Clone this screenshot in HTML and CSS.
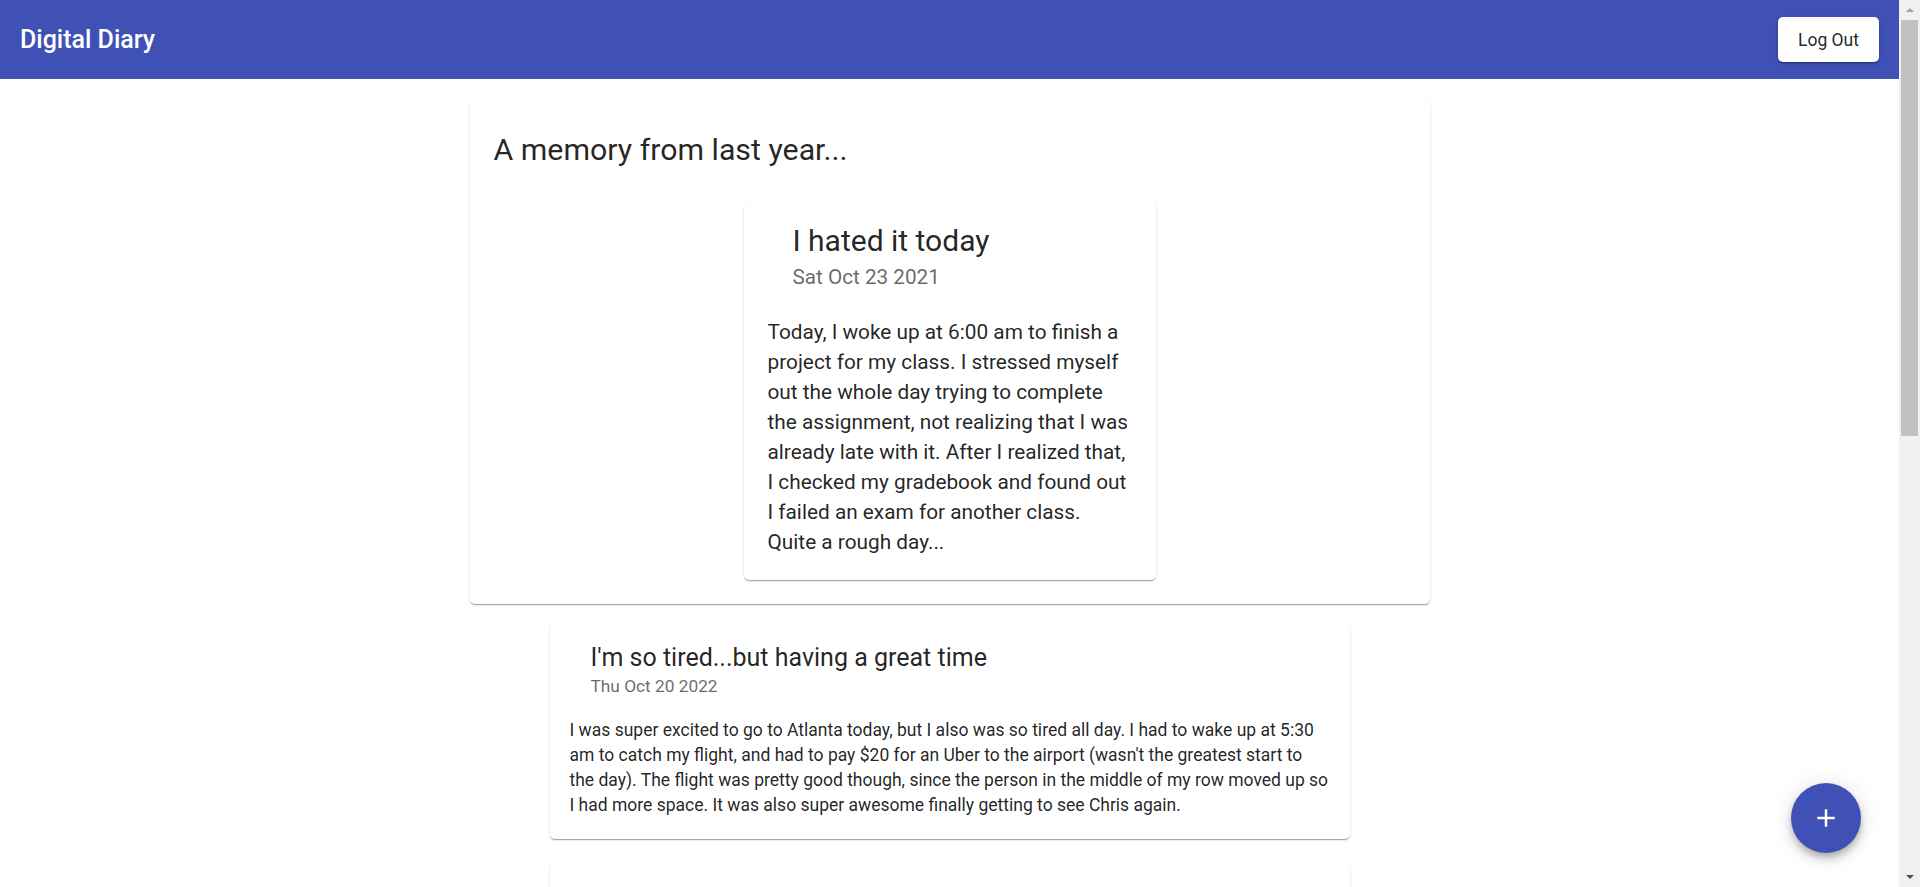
FILE: index.html
```html
<!DOCTYPE html>
<html lang="en">
<head>
<meta charset="utf-8">
<title>Digital Diary</title>
<link rel="stylesheet" href="styles.css">
</head>
<body>
<header class="appbar">
  <h1 class="brand">Digital Diary</h1>
  <button class="logout" type="button">Log Out</button>
</header>

<main class="content">
  <section class="memory">
    <h2 class="memory-heading">A memory from last year...</h2>
    <article class="memory-card">
      <div class="memory-card-head">
        <h3 class="memory-card-title">I hated it today</h3>
        <p class="memory-card-date">Sat Oct 23 2021</p>
      </div>
      <p class="memory-card-body">Today, I woke up at 6:00 am to finish a project for my class. I stressed myself out the whole day trying to complete the assignment, not realizing that I was already late with it. After I realized that, I checked my gradebook and found out I failed an exam for another class. Quite a rough day...</p>
    </article>
  </section>

  <div class="entries">
    <article class="entry">
      <div class="entry-head">
        <h3 class="entry-title">I'm so tired...but having a great time</h3>
        <p class="entry-date">Thu Oct 20 2022</p>
      </div>
      <p class="entry-body">I was super excited to go to Atlanta today, but I also was so tired all day. I had to wake up at 5:30 am to catch my flight, and had to pay $20 for an Uber to the airport (wasn't the greatest start to the day). The flight was pretty good though, since the person in the middle of my row moved up so I had more space. It was also super awesome finally getting to see Chris again.</p>
    </article>

    <article class="entry">
      <div class="entry-head">
        <h3 class="entry-title">Back to the daily grind</h3>
        <p class="entry-date">Mon Oct 17 2022</p>
      </div>
      <p class="entry-body">Classes started up again after the long weekend. I spent most of the afternoon in the library catching up on readings and then went to the gym with some friends. Dinner was leftover pasta, which honestly was better the second time around. Trying to get to bed early tonight.</p>
    </article>

    <article class="entry">
      <div class="entry-head">
        <h3 class="entry-title">A quiet Sunday</h3>
        <p class="entry-date">Sun Oct 16 2022</p>
      </div>
      <p class="entry-body">Slept in for the first time in weeks. Made pancakes, cleaned my room, and finally called my parents. In the evening I went on a long walk around the lake and watched the sunset. Nothing special happened, but it was exactly the kind of day I needed.</p>
    </article>

    <article class="entry">
      <div class="entry-head">
        <h3 class="entry-title">Midterm week</h3>
        <p class="entry-date">Wed Oct 12 2022</p>
      </div>
      <p class="entry-body">Two exams down, one more to go. The chemistry exam went better than expected, but I am not so sure about statistics. Celebrated with a late night pizza run before starting to study for the last one.</p>
    </article>
  </div>
</main>

<button class="fab" type="button" aria-label="add">
  <svg class="fab-icon" viewBox="0 0 24 24" width="30" height="30" aria-hidden="true"><path d="M19 13h-6v6h-2v-6H5v-2h6V5h2v6h6v2z" fill="#ffffff"/></svg>
</button>

<div class="scrollbar" aria-hidden="true">
  <div class="scroll-btn"><span class="arrow arrow-up"></span></div>
  <div class="scroll-thumb"></div>
  <div class="scroll-track"></div>
  <div class="scroll-btn"><span class="arrow arrow-down"></span></div>
</div>
</body>
</html>
```

FILE: styles.css
```css
html, body {
  margin: 0;
  padding: 0;
}

body {
  margin-right: 21px;
  font-family: Roboto, "Liberation Sans", Arial, sans-serif;
  color: rgba(0, 0, 0, 0.87);
  background: #ffffff;
}

/* Scrollbar as drawn in the reference */
.scrollbar {
  position: fixed;
  top: 0;
  right: 0;
  width: 21px;
  height: 100vh;
  background: #f1f1f1;
  display: flex;
  flex-direction: column;
  z-index: 20;
}

.scroll-btn {
  height: 20px;
  display: flex;
  align-items: center;
  justify-content: center;
}

.scroll-thumb {
  height: 416px;
  margin: 0 2px;
  background: #c1c1c1;
}

.scroll-track {
  flex: 1;
}

.arrow {
  width: 0;
  height: 0;
  border-left: 4.5px solid transparent;
  border-right: 4.5px solid transparent;
}

.arrow-up {
  border-bottom: 4.5px solid #a3a3a3;
}

.arrow-down {
  border-top: 4.5px solid #505050;
}

/* App bar */
.appbar {
  height: 79px;
  box-sizing: border-box;
  background: #3f51b5;
  display: flex;
  align-items: center;
  justify-content: space-between;
  padding: 0 20px;
}

.brand {
  margin: 0;
  font-size: 25px;
  font-weight: 500;
  line-height: 1.6;
  color: #ffffff;
}

.logout {
  height: 45px;
  padding: 0 20px;
  border: 0;
  border-radius: 5px;
  background: #ffffff;
  color: rgba(0, 0, 0, 0.87);
  font-family: Roboto, "Liberation Sans", Arial, sans-serif;
  font-size: 17.5px;
  font-weight: 400;
  box-shadow: 0 3px 1px -2px rgba(0,0,0,0.2), 0 2px 2px 0 rgba(0,0,0,0.14), 0 1px 5px 0 rgba(0,0,0,0.12);
  cursor: pointer;
}

/* Content */
.content {
  display: flex;
  flex-direction: column;
  align-items: center;
  padding: 21px 0 60px;
}

.memory {
  width: 960px;
  box-sizing: border-box;
  padding: 30px 24px 24px;
  border-radius: 5px;
  background: #ffffff;
  box-shadow: 0 2px 1px -1px rgba(0,0,0,0.2), 0 1px 1px 0 rgba(0,0,0,0.14), 0 1px 3px 0 rgba(0,0,0,0.12);
  display: flex;
  flex-direction: column;
}

.memory-heading {
  margin: 0;
  font-size: 30.3px;
  font-weight: 400;
  line-height: 40px;
}

.memory-card {
  align-self: center;
  width: 412px;
  margin-top: 32px;
  border-radius: 5px;
  background: #ffffff;
  box-shadow: 0 2px 1px -1px rgba(0,0,0,0.2), 0 1px 1px 0 rgba(0,0,0,0.14), 0 1px 3px 0 rgba(0,0,0,0.12);
}

.memory-card-head {
  padding: 19px 24px 0 49px;
}

.memory-card-title {
  margin: 0;
  font-size: 30px;
  font-weight: 400;
  line-height: 40px;
}

.memory-card-date {
  margin: 0;
  font-size: 20.7px;
  line-height: 33px;
  color: rgba(0, 0, 0, 0.6);
}

.memory-card-body {
  margin: 23px 0 0;
  padding: 0 22px 23px 24px;
  font-size: 20.8px;
  line-height: 30px;
}

.entries {
  display: flex;
  flex-direction: column;
  gap: 25px;
  margin-top: 20px;
}

.entry {
  width: 800px;
  border-radius: 5px;
  background: #ffffff;
  box-shadow: 0 2px 1px -1px rgba(0,0,0,0.2), 0 1px 1px 0 rgba(0,0,0,0.14), 0 1px 3px 0 rgba(0,0,0,0.12);
}

.entry-head {
  padding: 17px 20px 0 41px;
}

.entry-title {
  margin: 0;
  font-size: 25px;
  font-weight: 400;
  line-height: 33px;
}

.entry-date {
  margin: 0;
  font-size: 17.3px;
  line-height: 25px;
  color: rgba(0, 0, 0, 0.6);
}

.entry-body {
  margin: 19px 0 0;
  padding: 0 20px 21px;
  font-size: 17.5px;
  line-height: 25px;
}

/* Floating action button */
.fab {
  position: fixed;
  right: 59px;
  bottom: 34px;
  width: 70px;
  height: 70px;
  border: 0;
  border-radius: 50%;
  padding: 0;
  background: #3f51b5;
  display: flex;
  align-items: center;
  justify-content: center;
  box-shadow: 0 4px 6px -1px rgba(0,0,0,0.2), 0 7px 12px 0 rgba(0,0,0,0.14), 0 1px 22px 0 rgba(0,0,0,0.12);
  cursor: pointer;
  z-index: 10;
}

.fab-icon {
  display: block;
}
```
